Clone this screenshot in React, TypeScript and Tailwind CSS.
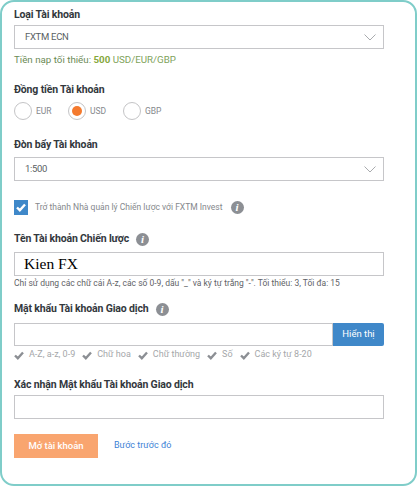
const FONT = "font-['Roboto','Noto_Sans',sans-serif]";

function Label({ children, info }: { children: React.ReactNode; info?: boolean }) {
  return (
    <div className="flex h-[16px] items-center gap-[7px] text-[10.5px] font-bold leading-[16px] tracking-[-0.15px] text-[#33383d]">
      <span>{children}</span>
      {info && <InfoDot />}
    </div>
  );
}

function InfoDot() {
  return (
    <span className="flex h-[13px] w-[13px] items-center justify-center rounded-full bg-[#8c8f94] font-['Liberation_Serif',serif] text-[11px] font-bold italic leading-none text-white">
      i
    </span>
  );
}

function Chevron() {
  return (
    <svg width="12" height="7" viewBox="0 0 12 7" fill="none" stroke="#a9abae" strokeWidth="1">
      <path d="M0.5 0.5 L6 6 L11.5 0.5" />
    </svg>
  );
}

function Tick({ className }: { className: string }) {
  return (
    <svg viewBox="0 0 10 9" className={className} fill="none" stroke="currentColor" strokeWidth="2.4">
      <path d="M1 4.5 L3.8 7.2 L9 1.5" />
    </svg>
  );
}

function Select({ value }: { value: string }) {
  return (
    <div className="flex h-[24px] w-[370px] items-center justify-between border border-[#c6c6c9] bg-white pl-[10px] pr-[7px] text-[9.5px] tracking-[-0.3px] text-[#5a5f64]">
      <span>{value}</span>
      <Chevron />
    </div>
  );
}

function Radio({ label, checked, className }: { label: string; checked?: boolean; className: string }) {
  return (
    <div className={`flex items-center gap-[4px] text-[8.5px] text-[#85888c] ${className}`}>
      <span className="flex h-[18px] w-[18px] items-center justify-center rounded-full border border-[#c4c4c6] bg-white">
        {checked && <span className="h-[10px] w-[10px] rounded-full bg-[#f47a2e]" />}
      </span>
      <span>{label}</span>
    </div>
  );
}

const RULES = ["A-Z, a-z, 0-9", "Chữ hoa", "Chữ thường", "Số", "Các ký tự 8-20"];

export default function App() {
  return (
    <div className={`h-[486px] w-[417px] overflow-hidden rounded-[14px] border-[2px] border-[#7fcdc9] bg-white ${FONT}`}>
      <div className="pl-[12px] pt-[5px]">
        <Label>Loại Tài khoản</Label>
        <div className="mt-[2px]">
          <Select value="FXTM ECN" />
        </div>
        <p className="mt-[4px] text-[9.75px] leading-[14px] text-[#6a8a55]">
          Tiền nạp tối thiểu: <b className="text-[#86a83c]">500</b> <span className="text-[#7ea35a]">USD/EUR/GBP</span>
        </p>

        <div className="mt-[15px]">
          <Label>Đồng tiền Tài khoản</Label>
        </div>
        <div className="mt-[4px] flex">
          <Radio label="EUR" className="w-[54px]" />
          <Radio label="USD" checked className="w-[55px]" />
          <Radio label="GBP" className="w-[54px]" />
        </div>

        <div className="mt-[17px]">
          <Label>Đòn bẩy Tài khoản</Label>
        </div>
        <div className="mt-[4px]">
          <Select value="1:500" />
        </div>

        <div className="mt-[19px] flex h-[15px] items-center text-[8.5px] text-[#85888c]">
          <span className="flex h-[15px] w-[14px] items-center justify-center bg-[#3f88c9]">
            <Tick className="h-[9px] w-[10px] text-white" />
          </span>
          <span className="ml-[7px]">Trở thành Nhà quản lý Chiến lược với FXTM Invest</span>
          <span className="ml-[8px]">
            <InfoDot />
          </span>
        </div>

        <div className="mt-[16px]">
          <Label info>Tên Tài khoản Chiến lược</Label>
        </div>
        <div className="mt-[5px] flex h-[24px] w-[370px] items-center border border-[#c6c6c9] bg-white pl-[9px] font-['Liberation_Serif',serif] text-[15.5px] text-black">
          Kien FX
        </div>
        <p className="text-[8.5px] leading-[14px] text-[#5f6367]">
          Chỉ sử dụng các chữ cái A-z, các số 0-9, dấu "_" và ký tự trắng "-". Tối thiểu: 3, Tối đa: 15
        </p>

        <div className="mt-[11px]">
          <Label info>Mật khẩu Tài khoản Giao dịch</Label>
        </div>
        <div className="mt-[6px] flex h-[23px] w-[370px]">
          <div className="flex-1 border border-[#c6c6c9] bg-white" />
          <button className="w-[51px] rounded-r-[2px] bg-[#3f88c9] text-[9.5px] text-white">Hiển thị</button>
        </div>
        <div className="mt-[2px] flex h-[14px] items-center gap-[7px] text-[9px] text-[#a5a7aa]">
          {RULES.map((rule) => (
            <span key={rule} className="flex items-center gap-[5px]">
              <Tick className="h-[9px] w-[10px] text-[#8c8f94]" />
              {rule}
            </span>
          ))}
        </div>

        <div className="mt-[15px]">
          <Label>Xác nhận Mật khẩu Tài khoản Giao dịch</Label>
        </div>
        <div className="mt-[2px] h-[24px] w-[370px] border border-[#c6c6c9] bg-white" />

        <div className="mt-[15px] flex items-center">
          <button className="h-[24px] w-[84px] bg-[#f9a56f] text-[9.5px] font-medium text-white">Mở tài khoản</button>
          <a className="ml-[16px] text-[9px] text-[#3d82d6]">Bước trước đó</a>
        </div>
      </div>
    </div>
  );
}
